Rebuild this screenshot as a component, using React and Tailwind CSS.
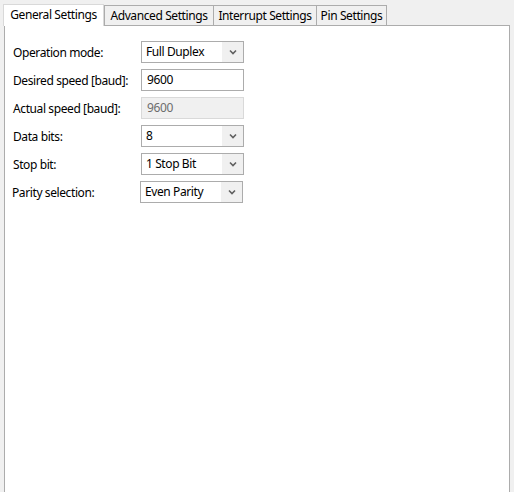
import React from "react";

const tabs = [
  { t: "General Settings", w: "w-[101px]" },
  { t: "Advanced Settings", w: "w-[110px]" },
  { t: "Interrupt Settings", w: "w-[104px]" },
  { t: "Pin Settings", w: "w-[71px]" },
];

function Chevron() {
  return (
    <svg width="8" height="6" viewBox="0 0 8 6" className="block">
      <path d="M1 1.5 L4 4.5 L7 1.5" fill="none" stroke="#606060" strokeWidth="1.6" />
    </svg>
  );
}

function Combo({ value }) {
  return (
    <div className="flex h-[22px] w-[103px] items-stretch border border-[#acacac] bg-white">
      <div className="flex-1 pl-[4px] leading-[20px] text-black">{value}</div>
      <div className="flex w-[21px] items-center justify-center bg-[#f0f0f0]">
        <Chevron />
      </div>
    </div>
  );
}

function TextBox({ value, disabled }) {
  return (
    <div
      className={
        disabled
          ? "h-[22px] w-[103px] border border-[#d9d9d9] bg-[#f0f0f0] pl-[5px] leading-[20px] text-[#6d6d6d]"
          : "h-[22px] w-[103px] border border-[#acacac] bg-white pl-[5px] leading-[20px] text-black"
      }
    >
      {value}
    </div>
  );
}

function Row({ label, children, shift }) {
  return (
    <div className={shift ? "flex items-center -ml-px" : "flex items-center"}>
      <div className="w-[128px] pt-px text-black">{label}</div>
      {children}
    </div>
  );
}

export default function App() {
  return (
    <div
      className="flex h-[492px] w-[514px] flex-col overflow-hidden bg-[#f0f0f0] text-[12px] tracking-[-0.4px]"
      style={{ fontFamily: '"Noto Sans", "Liberation Sans", sans-serif' }}
    >
      {/* tab strip */}
      <div className="relative z-10 flex items-end pl-[3px] pt-[4px]">
        {tabs.map(({ t, w }, i) =>
          i === 0 ? (
            <div
              key={t}
              className={`-mb-px flex h-[22px] ${w} items-center justify-center border border-b-0 border-[#d9d9d9] bg-white pb-px text-black`}
            >
              {t}
            </div>
          ) : (
            <div
              key={t}
              className={`${i > 1 ? "-ml-px" : ""} flex h-[20px] ${w} items-center justify-center border border-b-0 border-[#acacac] bg-[#f0f0f0] pt-px text-black`}
            >
              {t}
            </div>
          )
        )}
      </div>

      {/* panel */}
      <div className="ml-[4px] w-[506px] flex-1 border border-b-0 border-[#acacac] bg-white pl-[8px] pt-[15px]">
        <div className="flex flex-col gap-[6px]">
          <Row label="Operation mode:">
            <Combo value="Full Duplex" />
          </Row>
          <Row label="Desired speed [baud]:">
            <TextBox value="9600" />
          </Row>
          <Row label="Actual speed [baud]:">
            <TextBox value="9600" disabled />
          </Row>
          <Row label="Data bits:">
            <Combo value="8" />
          </Row>
          <Row label="Stop bit:">
            <Combo value="1 Stop Bit" />
          </Row>
          <Row label="Parity selection:" shift>
            <Combo value="Even Parity" />
          </Row>
        </div>
      </div>
    </div>
  );
}
